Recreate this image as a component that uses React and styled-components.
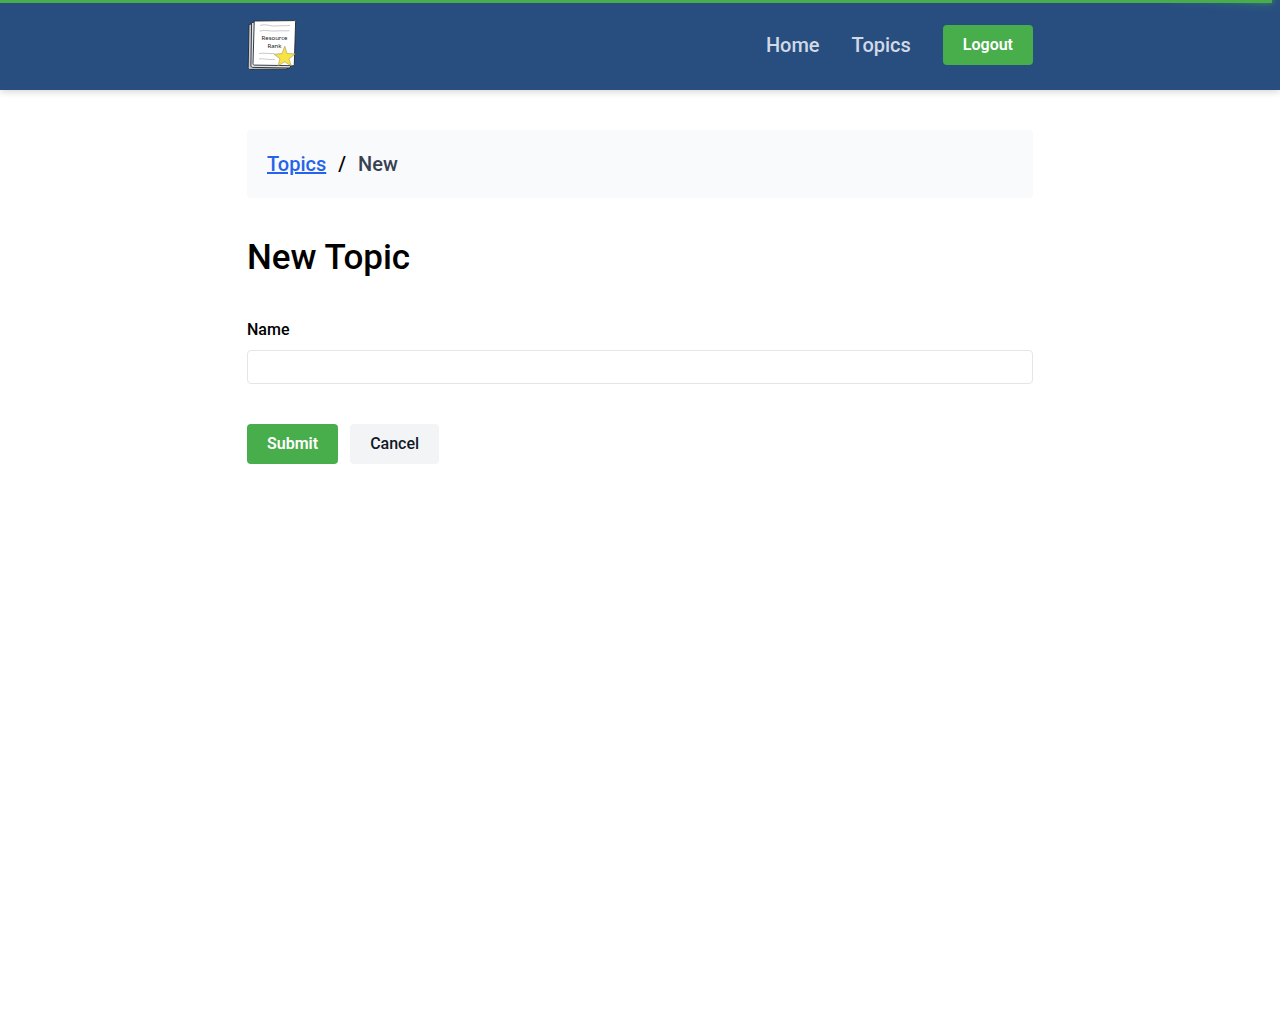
import React from "react";
import styled, { createGlobalStyle, css } from "styled-components";

const GlobalStyle = createGlobalStyle`
  *, *::before, *::after { box-sizing: border-box; }
  body {
    margin: 0;
    background: #ffffff;
    color: #000000;
    font-family: Roboto, "Noto Sans", sans-serif;
    font-size: 16px;
    font-weight: 500;
    line-height: 24px;
  }
`;

const Progress = styled.div`
  position: fixed;
  top: 0;
  left: 0;
  z-index: 10;
  width: ${(props) => props.$value}%;
  height: 3px;
  background: #48ad4b;

  &::after {
    content: "";
    position: absolute;
    right: 0;
    width: 100px;
    height: 100%;
    box-shadow: 0 0 10px #48ad4b, 0 0 5px #48ad4b;
    transform: rotate(3deg) translate(0, -4px);
  }
`;

const Header = styled.header`
  background: #284e80;
  box-shadow: 0 1px 8px rgba(0, 0, 0, 0.2);
`;

const Container = styled.div`
  max-width: 826px;
  margin: 0 auto;
  padding: 0 20px;
`;

const HeaderRow = styled(Container)`
  display: flex;
  align-items: center;
  justify-content: space-between;
  padding-top: 20px;
  padding-bottom: 20px;
`;

const HomeLogo = styled.a`
  display: block;
  height: 50px;
`;

const Nav = styled.nav`
  display: flex;
  align-items: center;
  gap: 32px;
`;

const NavLink = styled.a`
  color: #d1d9e6;
  font-size: 20px;
  line-height: 28px;
  text-decoration: none;
`;

const Button = styled.button`
  height: 40px;
  padding: 0 20px;
  border: 0;
  border-radius: 4px;
  font: inherit;
  cursor: pointer;
  ${(props) =>
    props.$secondary
      ? css`
          background: #f3f4f6;
          color: #111827;
        `
      : css`
          background: #48ad4b;
          color: #ffffff;
          font-weight: 600;
        `}
`;

const Main = styled(Container).attrs({ as: "main" })`
  display: flex;
  flex-direction: column;
  gap: 40px;
  padding-top: 40px;
  padding-bottom: 40px;
`;

const Breadcrumb = styled.nav`
  display: flex;
  gap: 12px;
  padding: 20px;
  border-radius: 4px;
  background: #f9fafc;
  font-size: 20px;
  line-height: 28px;
`;

const CrumbLink = styled.a`
  color: #2563eb;
  text-decoration: underline;
`;

const CurrentCrumb = styled.span`
  color: #374151;
`;

const Title = styled.h1`
  margin: 0;
  font-size: 35px;
  font-weight: 500;
  line-height: 40px;
`;

const Form = styled.form`
  display: flex;
  flex-direction: column;
  gap: 40px;
`;

const Field = styled.div`
  display: flex;
  flex-direction: column;
  gap: 8px;
`;

const TextInput = styled.input`
  width: 100%;
  height: 34px;
  padding: 4px 8px;
  border: 1px solid #e5e5e5;
  border-radius: 4px;
  background: #ffffff;
  font: inherit;
`;

const Actions = styled.div`
  display: flex;
  gap: 12px;
`;

function Logo() {
  return (
    <svg width="50" height="50" viewBox="0 0 50 50" role="img" aria-label="Resource Rank">
      <g stroke="#202733" strokeWidth=".9" strokeLinejoin="round">
        <path d="M2 4.5 6 3.6 41 46l-1 3.2L2.8 49.4c-1 0-1.6-.6-1.6-1.6Z" fill="#c9cdd2" />
        <path d="M4.6 2.6 8 2l36 43-1 3-37.4-.6c-1 0-1.7-.7-1.7-1.7Z" fill="#e4e6e8" />
        <path d="M8.2 1 47.6.6c.8 0 1.1.6 1 1.5L47.3 44c0 1-.5 1.7-1.5 1.7l-38.4-.6c-1 0-1.5-.7-1.4-1.6L7.2 2C7.2 1.3 7.5 1 8.2 1Z" fill="#fff" />
      </g>
      <path d="M13 5.5c6-2 10 1 16 .5s9 0 14-.6M12.5 11c7-1.4 10 .5 16 0s9 0 14-.2M12 33.5c6-.8 9 .4 15 0M12 39c5-.8 8 1 16 .5" fill="none" stroke="#b0b0b0" strokeWidth=".7" />
      <g fill="#111" fontFamily="Noto Sans, sans-serif" fontSize="6" fontWeight="400" textAnchor="middle">
        <text x="27.5" y="19.5">Resource</text>
        <text x="27.5" y="28">Rank</text>
      </g>
      <path d="m37.8 26.2 2.2 7.3 8.2.4-6.3 5 2.6 7.1-6.8-4.2-6.7 4 2-7.1-6-4.5 8-.6Z" fill="#f8e347" stroke="#a39b58" strokeWidth=".6" strokeLinejoin="round" />
    </svg>
  );
}

export default function App() {
  return (
    <>
      <GlobalStyle />
      <Progress $value={99.4} />
      <Header>
        <HeaderRow>
          <HomeLogo href="#home"><Logo /></HomeLogo>
          <Nav aria-label="Main">
            <NavLink href="#home">Home</NavLink>
            <NavLink href="#topics">Topics</NavLink>
            <Button type="button">Logout</Button>
          </Nav>
        </HeaderRow>
      </Header>
      <Main>
        <Breadcrumb aria-label="Breadcrumb">
          <CrumbLink href="#topics">Topics</CrumbLink>
          <span aria-hidden="true">/</span>
          <CurrentCrumb aria-current="page">New</CurrentCrumb>
        </Breadcrumb>
        <Title>New Topic</Title>
        <Form onSubmit={(event) => event.preventDefault()}>
          <Field>
            <label htmlFor="topic-name">Name</label>
            <TextInput id="topic-name" name="name" type="text" />
          </Field>
          <Actions>
            <Button type="submit">Submit</Button>
            <Button type="button" $secondary>Cancel</Button>
          </Actions>
        </Form>
      </Main>
    </>
  );
}
